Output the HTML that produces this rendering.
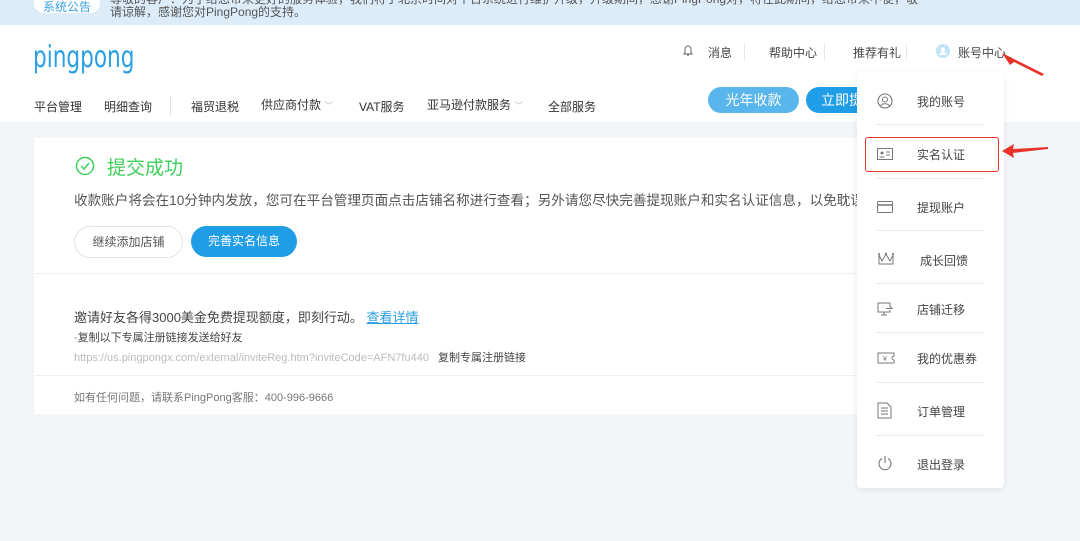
<!DOCTYPE html>
<html><head><meta charset="utf-8">
<style>
*{margin:0;padding:0;box-sizing:border-box}
body{width:1080px;height:541px;overflow:hidden;background:#f3f6f9;font-family:"Liberation Sans","Noto Sans CJK SC",sans-serif;color:#333;position:relative;font-size:12px}
.abs{position:absolute;white-space:nowrap}
.banner{position:absolute;left:0;top:0;width:1080px;height:25px;background:#dcedf9}
.hdr{position:absolute;left:0;top:25px;width:1080px;height:97px;background:#fff}
.card{position:absolute;left:34px;top:138px;width:826px;height:276px;background:#fff}
.dd{position:absolute;left:857px;top:72px;width:147px;height:416px;background:#fff;border-radius:4px;box-shadow:0 2px 8px rgba(0,0,0,.08)}
.it{position:absolute;left:0;width:147px;font-size:12px;color:#444}
.it .t{position:absolute;left:60px}
.it svg{position:absolute;left:20px}
.ln{position:absolute;left:19px;width:108px;height:1px;background:#e6e9ec}
</style></head><body>
<div class="banner"></div>
<div class="abs" style="left:34px;top:-7px;width:66px;height:20px;background:#fff;border-radius:10px;color:#3aa0e6;font-size:12px;text-align:center;line-height:20px;padding-top:4px">系统公告</div>
<div class="abs" style="left:110px;top:-7px;font-size:12px;color:#555;line-height:13px">尊敬的客户：为了给您带来更好的服务体验，我们将于北京时间对平台系统进行维护升级，升级期间，感谢PingPong对，将在此期间，给您带来不便，敬<br>请谅解，感谢您对PingPong的支持。</div>
<div class="hdr"></div>
<div class="abs" style="left:33px;top:40px;font-size:30px;color:#2a9fe3;font-family:'DejaVu Sans',sans-serif;transform:scaleX(0.72);transform-origin:0 0">pingpong</div>
<div class="abs" style="top:98px;left:34px;font-size:12px;color:#333">平台管理</div>
<div class="abs" style="top:98px;left:104px;font-size:12px;color:#333">明细查询</div>
<div class="abs" style="top:96px;left:170px;width:1px;height:20px;background:#e3e3e3"></div>
<div class="abs" style="top:98px;left:191px">福贸退税</div>
<div class="abs" style="top:96px;left:261px">供应商付款 <span style="color:#bbb;font-size:9px">﹀</span></div>
<div class="abs" style="top:98px;left:359px">VAT服务</div>
<div class="abs" style="top:96px;left:427px">亚马逊付款服务 <span style="color:#bbb;font-size:9px">﹀</span></div>
<div class="abs" style="top:98px;left:548px">全部服务</div>
<div class="abs" style="left:708px;top:87px;width:91px;height:26px;border-radius:13px;background:#58b6ec;color:#fff;font-size:14px;text-align:center;line-height:26px">光年收款</div>
<div class="abs" style="left:806px;top:87px;width:70px;height:26px;border-radius:13px 0 0 13px;background:#1f9de6;color:#fff;font-size:14px;line-height:26px;padding-left:15px;overflow:hidden">立即提</div>
<svg class="abs" style="left:682px;top:44px" width="12" height="13" viewBox="0 0 12 13"><path d="M3 9V5a3 3 0 0 1 6 0v4l1 1H2z M5 11h2" fill="none" stroke="#666" stroke-width="1"/></svg>
<div class="abs" style="left:708px;top:44px;color:#444">消息</div>
<div class="abs" style="left:744px;top:44px;width:1px;height:16px;background:#e6e6e6"></div>
<div class="abs" style="left:769px;top:44px;color:#444">帮助中心</div>
<div class="abs" style="left:824px;top:44px;width:1px;height:16px;background:#e6e6e6"></div>
<div class="abs" style="left:853px;top:44px;color:#444">推荐有礼</div>
<div class="abs" style="left:906px;top:44px;width:1px;height:16px;background:#e6e6e6"></div>
<svg class="abs" style="left:936px;top:44px" width="14" height="14" viewBox="0 0 14 14"><circle cx="7" cy="7" r="7" fill="#bfe3f7"/><circle cx="7" cy="5.5" r="2.3" fill="#fff"/><path d="M3 11a4 3 0 0 1 8 0" fill="#fff"/></svg>
<div class="abs" style="left:958px;top:44px;color:#444">账号中心</div>
<svg class="abs" style="left:1000px;top:50px" width="46" height="28"><path d="M2 3 L44 24 L42 26 L14 12 L10 15 Z" fill="#e8332a"/></svg>

<div class="card"></div>
<svg class="abs" style="left:75px;top:156px" width="20" height="20" viewBox="0 0 20 20"><circle cx="10" cy="10" r="8.5" fill="none" stroke="#3fcf5b" stroke-width="1.5"/><path d="M6 10l3 3 5-6" fill="none" stroke="#3fcf5b" stroke-width="1.5"/></svg>
<div class="abs" style="left:107px;top:153px;font-size:19px;color:#3fcf5b">提交成功</div>
<div class="abs" style="left:74px;top:189px;font-size:13.6px;color:#555">收款账户将会在10分钟内发放，您可在平台管理页面点击店铺名称进行查看；另外请您尽快完善提现账户和实名认证信息，以免耽误您的</div>
<div class="abs" style="left:74px;top:226px;width:109px;height:32px;border:1px solid #e3e3e3;border-radius:16px;text-align:center;line-height:30px;color:#555">继续添加店铺</div>
<div class="abs" style="left:191px;top:226px;width:106px;height:31px;background:#1f9de6;border-radius:16px;text-align:center;line-height:31px;color:#fff">完善实名信息</div>
<div class="abs" style="left:34px;top:273px;width:826px;height:1px;background:#eef0f2"></div>
<div class="abs" style="left:74px;top:307px;font-size:13px;color:#444">邀请好友各得3000美金免费提现额度，即刻行动。 <span style="color:#2a9fe3;text-decoration:underline">查看详情</span></div>
<div class="abs" style="left:74px;top:329px;font-size:11px;color:#444">·复制以下专属注册链接发送给好友</div>
<div class="abs" style="left:74px;top:349px;font-size:11px;color:#bbb">https://us.pingpongx.com/external/inviteReg.htm?inviteCode=AFN7fu440 <span style="color:#444;margin-left:6px">复制专属注册链接</span></div>
<div class="abs" style="left:34px;top:375px;width:826px;height:1px;background:#eef0f2"></div>
<div class="abs" style="left:74px;top:389px;font-size:11px;color:#777">如有任何问题，请联系PingPong客服：400-996-9666</div>

<div class="dd">
<div class="it" style="top:21px"><svg width="16" height="16" viewBox="0 0 16 16" style="top:0"><circle cx="8" cy="8" r="7" fill="none" stroke="#777" stroke-width="1.1"/><circle cx="8" cy="6.5" r="2.5" fill="none" stroke="#777"/><path d="M3.5 13a5 4 0 0 1 9 0" fill="none" stroke="#777"/></svg><span class="t">我的账号</span></div>
<div class="ln" style="top:52px"></div>
<div class="it" style="top:74px"><svg width="16" height="12" viewBox="0 0 16 12" style="top:2px"><rect x=".5" y=".5" width="15" height="11" fill="none" stroke="#777"/><circle cx="5" cy="5" r="1.5" fill="#777"/><path d="M2.5 9h5M9 4h4M9 7h4" stroke="#777"/></svg><span class="t">实名认证</span></div>
<div class="abs" style="left:8px;top:65px;width:134px;height:35px;border:1.5px solid #e8332a;border-radius:3px"></div>
<div class="ln" style="top:106px"></div>
<div class="it" style="top:127px"><svg width="16" height="12" viewBox="0 0 16 12" style="top:2px"><rect x=".5" y=".5" width="15" height="11" rx="1" fill="none" stroke="#777"/><path d="M1 4h14" stroke="#777" stroke-width="1.5"/></svg><span class="t">提现账户</span></div>
<div class="ln" style="top:158px"></div>
<div class="it" style="top:180px"><svg width="18" height="14" viewBox="0 0 18 14" style="top:0"><path d="M2 3l3 6 4-7 4 7 3-6v9H2z" fill="none" stroke="#777"/><circle cx="2" cy="2" r="1" fill="#777"/><circle cx="9" cy="1.5" r="1" fill="#777"/><circle cx="16" cy="2" r="1" fill="#777"/></svg><span class="t" style="left:63px">成长回馈</span></div>
<div class="ln" style="top:211px"></div>
<div class="it" style="top:229px"><svg width="16" height="14" viewBox="0 0 16 14" style="top:1px"><path d="M13 5V1H1v9h12V8M7 10v3M4 13h6M9 6.5h6l-2-2" fill="none" stroke="#777"/></svg><span class="t">店铺迁移</span></div>
<div class="ln" style="top:260px"></div>
<div class="it" style="top:278px"><svg width="18" height="12" viewBox="0 0 18 12" style="top:2px"><path d="M1 1h16v3a2 2 0 0 0 0 4v3H1z" fill="none" stroke="#777"/><text x="6" y="9" font-size="7" fill="#777">¥</text></svg><span class="t">我的优惠券</span></div>
<div class="ln" style="top:310px"></div>
<div class="it" style="top:331px"><svg width="15" height="17" viewBox="0 0 15 17" style="top:-1px"><path d="M1 1h9l4 4v11H1z M4 6h7M4 9h7M4 12h7" fill="none" stroke="#777"/></svg><span class="t">订单管理</span></div>
<div class="ln" style="top:363px"></div>
<div class="it" style="top:384px"><svg width="16" height="16" viewBox="0 0 16 16" style="top:-1px"><path d="M5 3.5a6 6 0 1 0 6 0M8 1v7" fill="none" stroke="#777" stroke-width="1.1"/></svg><span class="t">退出登录</span></div>
</div>
<svg class="abs" style="left:1000px;top:142px" width="50" height="18"><path d="M2 9 L14 2 L13 7 L48 5 L48 7 L13 11 L14 16 Z" fill="#e8332a"/></svg>
</body></html>
